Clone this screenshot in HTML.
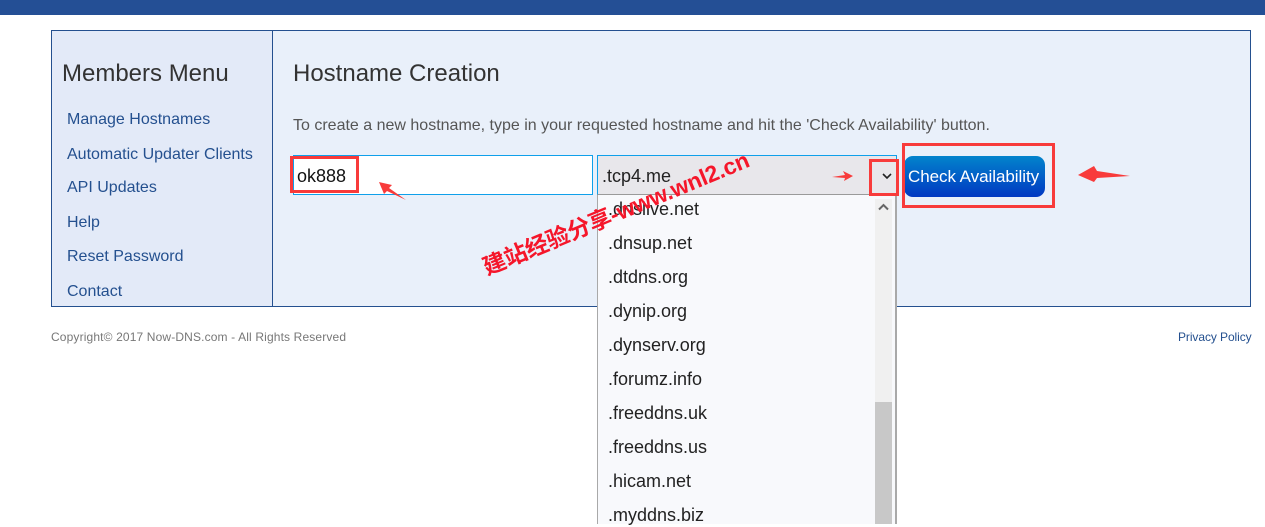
<!DOCTYPE html>
<html lang="zh">
<head>
<meta charset="utf-8">
<title>Hostname Creation</title>
<style>
html,body{margin:0;padding:0;background:#fff;}
body{width:1265px;height:524px;position:relative;overflow:hidden;font-family:"Liberation Sans",Arial,sans-serif;}
.a{position:absolute;white-space:nowrap;}
.box{position:absolute;box-sizing:border-box;}
.lnk{color:#24508f;font-size:16px;line-height:20px;left:67px;}
.opt{left:608px;font-size:18px;line-height:24px;color:#222;}
.red{position:absolute;box-sizing:border-box;border:3px solid #f83b3b;}
</style>
</head>
<body>
<div class="box" style="left:0;top:0;width:1265px;height:15px;background:#244f95"></div>

<div class="box" style="left:51px;top:30px;width:1200px;height:277px;background:#e9f0fa;border:1px solid #24508f"></div>
<div class="box" style="left:52px;top:31px;width:221px;height:275px;background:#e3eaf8;border-right:1px solid #24508f"></div>

<div class="a" style="left:62px;top:60px;font-size:24px;line-height:28px;color:#333">Members Menu</div>
<div class="a lnk" style="top:110px">Manage Hostnames</div>
<div class="a lnk" style="top:145px">Automatic Updater Clients</div>
<div class="a lnk" style="top:178px">API Updates</div>
<div class="a lnk" style="top:213px">Help</div>
<div class="a lnk" style="top:247px">Reset Password</div>
<div class="a lnk" style="top:282px">Contact</div>

<div class="a" style="left:293px;top:60px;font-size:24px;line-height:28px;color:#333">Hostname Creation</div>
<div class="a" style="left:293px;top:116px;font-size:16px;line-height:20px;color:#555">To create a new hostname, type in your requested hostname and hit the 'Check Availability' button.</div>

<div class="box" style="left:293px;top:155px;width:300px;height:40px;background:#fff;border:1px solid #0fa0ea"></div>
<div class="a" style="left:297px;top:164px;font-size:18px;line-height:24px;color:#111">ok888</div>

<div class="box" style="left:597px;top:155px;width:300px;height:40px;background:#e8e7eb;border:1px solid #0fa0ea;border-bottom:1px solid #9a9a9a"></div>
<div class="a" style="left:602px;top:164px;font-size:18px;line-height:24px;color:#222">.tcp4.me</div>
<svg class="a" style="left:881px;top:171px" width="12" height="10" viewBox="0 0 12 10"><path d="M2 3 L6 7 L10 3" fill="none" stroke="#222" stroke-width="1.6"/></svg>

<div class="box" style="left:597px;top:195px;width:300px;height:329px;background:#f8f9fc;border-left:1px solid #a9a9a9;border-right:2px solid #a9a9a9"></div>
<div class="box" style="left:875px;top:199px;width:17px;height:325px;background:#f0f0f0"></div>
<div class="box" style="left:875px;top:402px;width:17px;height:122px;background:#c8c8c8"></div>
<svg class="a" style="left:877px;top:201px" width="13" height="12" viewBox="0 0 13 12"><path d="M2 8.5 L6.5 4 L11 8.5" fill="none" stroke="#666" stroke-width="2"/></svg>

<div class="a opt" style="top:197px">.dnslive.net</div>
<div class="a opt" style="top:231px">.dnsup.net</div>
<div class="a opt" style="top:265px">.dtdns.org</div>
<div class="a opt" style="top:299px">.dynip.org</div>
<div class="a opt" style="top:333px">.dynserv.org</div>
<div class="a opt" style="top:367px">.forumz.info</div>
<div class="a opt" style="top:401px">.freeddns.uk</div>
<div class="a opt" style="top:435px">.freeddns.us</div>
<div class="a opt" style="top:469px">.hicam.net</div>
<div class="a opt" style="top:503px">.myddns.biz</div>

<div class="box" style="left:904px;top:156px;width:141px;height:41px;border-radius:9px;background:linear-gradient(#0284cc,#0138c2)"></div>
<div class="a" style="left:908px;top:166px;font-size:17px;line-height:21px;color:#fff;letter-spacing:-.05px">Check Availability</div>

<div class="red" style="left:290px;top:156px;width:69px;height:37px"></div>
<div class="red" style="left:869px;top:159px;width:30px;height:37px"></div>
<div class="red" style="left:902px;top:143px;width:153px;height:65px"></div>

<svg class="a" style="left:0;top:0" width="1265" height="524" viewBox="0 0 1265 524">
<path d="M379 182 L392 185 L389 188 L406 200 L387 191 L384 194 Z" fill="#f83b3b"/>
<path d="M832 177 L845 175 L843 171 L853 176 L844 181 L845 178 Z" fill="#f83b3b"/>
<path d="M1078 175 L1094 166 L1097 171 L1130 176 L1097 178 L1094 182 Z" fill="#f83b3b"/>
</svg>

<div class="a" style="left:484px;top:255px;font-family:'Liberation Sans','Noto Sans CJK SC',sans-serif;font-size:23px;line-height:26px;font-weight:700;letter-spacing:-.2px;color:#f5162a;transform-origin:0 50%;transform:rotate(-22.5deg)">建站经验分享-www.wnl2.cn</div>

<div class="a" style="left:51px;top:329px;font-size:12px;line-height:16px;color:#777;letter-spacing:.14px">Copyright© 2017 Now-DNS.com - All Rights Reserved</div>
<div class="a" style="left:1178px;top:329px;font-size:12px;line-height:16px;color:#24508f;letter-spacing:-.08px">Privacy Policy</div>
</body>
</html>
